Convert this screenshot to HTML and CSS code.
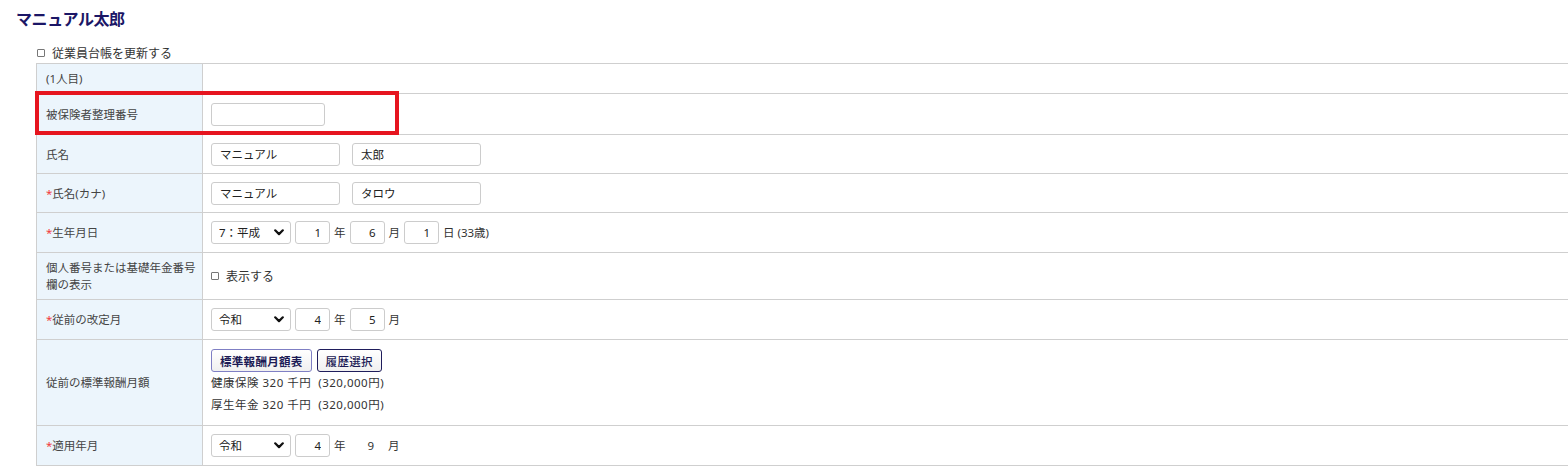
FILE: index.html
```html
<!DOCTYPE html>
<html lang="ja">
<head>
<meta charset="utf-8">
<title>マニュアル太郎</title>
<link rel="stylesheet" href="styles.css">
</head>
<body>
<h1 class="title">マニュアル太郎</h1>
<div class="form-wrap">
  <label class="update"><input type="checkbox" class="chk"><span>従業員台帳を更新する</span></label>
  <div class="table-box">
    <table class="form-table">
      <tr class="r-head"><th>(1人目)</th><td></td></tr>
      <tr class="r-num"><th>被保険者整理番号</th><td><input class="txt txt-num" type="text" value=""></td></tr>
      <tr class="r-name"><th>氏名</th><td><div class="line"><input class="txt txt-name" type="text" value="マニュアル"><input class="txt txt-name gap-l" type="text" value="太郎"></div></td></tr>
      <tr class="r-name"><th><span class="req">*</span>氏名(カナ)</th><td><div class="line"><input class="txt txt-name" type="text" value="マニュアル"><input class="txt txt-name gap-l" type="text" value="タロウ"></div></td></tr>
      <tr class="r-std"><th><span class="req">*</span>生年月日</th><td><div class="line"><select class="sel"><option>7：平成</option></select><input class="txt txt-sm" type="text" value="1"><span>年</span><input class="txt txt-sm" type="text" value="6"><span>月</span><input class="txt txt-sm" type="text" value="1"><span>日 (33歳)</span></div></td></tr>
      <tr class="r-two"><th>個人番号または基礎年金番号欄の表示</th><td><label class="line show"><input type="checkbox" class="chk"><span>表示する</span></label></td></tr>
      <tr class="r-std"><th><span class="req">*</span>従前の改定月</th><td><div class="line"><select class="sel"><option>令和</option></select><input class="txt txt-sm" type="text" value="4"><span>年</span><input class="txt txt-sm" type="text" value="5"><span>月</span></div></td></tr>
      <tr class="r-big"><th>従前の標準報酬月額</th><td>
        <div class="btns"><button class="btn btn-primary" type="button">標準報酬月額表</button><button class="btn btn-dark" type="button">履歴選択</button></div>
        <div class="amount">健康保険 320 千円&nbsp; (320,000円)</div>
        <div class="amount">厚生年金 320 千円&nbsp; (320,000円)</div>
      </td></tr>
      <tr class="r-std"><th><span class="req">*</span>適用年月</th><td><div class="line"><select class="sel"><option>令和</option></select><input class="txt txt-sm" type="text" value="4"><span>年</span><span class="fixed-m">9</span><span class="fixed-u">月</span></div></td></tr>
    </table>
    <div class="highlight"></div>
  </div>
</div>
</body>
</html>
```

FILE: styles.css
```css
html, body {
  margin: 0;
  padding: 0;
  overflow: hidden;
  background: #fff;
}
body {
  font-family: "Noto Sans", "Noto Sans CJK JP", sans-serif;
  font-size: 11.5px;
  color: #333;
}
.title {
  margin: 0;
  padding: 8px 0 0 16px;
  font-family: "Noto Sans CJK JP", sans-serif;
  font-size: 16px;
  line-height: 20px;
  font-weight: bold;
  color: #1b1666;
  letter-spacing: -0.4px;
}
.form-wrap {
  margin-left: 36px;
}
.update {
  display: flex;
  align-items: center;
  gap: 7px;
  height: 18px;
  margin-top: 16px;
  margin-bottom: 1px;
  font-size: 12px;
  padding-left: 1px;
}
.chk {
  -webkit-appearance: none;
  appearance: none;
  width: 8px;
  height: 8px;
  margin: 0;
  border: 1px solid #777;
  border-radius: 1px;
  background: #fff;
  box-sizing: border-box;
}
.table-box {
  position: relative;
}
.form-table {
  border-collapse: collapse;
  width: 1560px;
  table-layout: fixed;
}
.form-table th,
.form-table td {
  border: 1px solid #cfcfcf;
  padding: 0 8px;
  vertical-align: middle;
  text-align: left;
  font-weight: normal;
  line-height: 17px;
}
.form-table th {
  width: 152px;
  padding: 0 4px 0 9px;
  background: #ecf5fc;
  color: #444;
}
.r-head { height: 30px; }
.r-num { height: 41px; }
.r-name { height: 39px; }
.r-std { height: 40px; }
.r-two { height: 47px; }
.r-big { height: 86px; }
.req {
  color: #f23c3c;
}
.line {
  display: flex;
  align-items: center;
  gap: 4px;
}
.show {
  gap: 7px;
  font-size: 12px;
}
.txt {
  box-sizing: border-box;
  height: 23px;
  border: 1px solid #cccccc;
  border-radius: 3px;
  padding: 0 8px;
  margin: 0;
  font-family: inherit;
  font-size: 11.5px;
  color: #222;
  background: #fff;
  outline: none;
}
.txt-num { width: 114px; display: block; }
.txt-name { width: 129px; }
.gap-l { margin-left: 8px; }
.txt-sm {
  width: 35px;
  text-align: right;
}
.sel {
  -webkit-appearance: none;
  appearance: none;
  box-sizing: border-box;
  width: 80px;
  height: 23px;
  margin: 0;
  padding: 0 0 0 7px;
  border: 1px solid #cccccc;
  border-radius: 3px;
  font-family: inherit;
  font-size: 11.5px;
  color: #222;
  background: #fff url("data:image/svg+xml;utf8,<svg xmlns='http://www.w3.org/2000/svg' width='10' height='7' viewBox='0 0 10 7'><path d='M1.2 1.3 L5 5.1 L8.8 1.3' fill='none' stroke='%23111' stroke-width='2.2' stroke-linecap='round' stroke-linejoin='round'/></svg>") no-repeat right 6px center;
}
.fixed-m { margin-left: 18px; }
.fixed-u { margin-left: 10px; }
.btns {
  display: flex;
  gap: 5px;
}
.btn {
  box-sizing: border-box;
  height: 23px;
  padding: 0 8px;
  border-radius: 3px;
  font-family: inherit;
  font-size: 11.5px;
  color: #1b1a55;
  background: linear-gradient(#ffffff, #f0f0f0);
  cursor: pointer;
  letter-spacing: 0.3px;
}
.btn-primary {
  border: 1px solid #7f7fc4;
  font-weight: bold;
}
.btn-dark {
  border: 1px solid #1f1d5c;
  font-weight: 500;
}
.amount {
  line-height: 22px;
  color: #333;
  letter-spacing: 0.5px;
}
.highlight {
  position: absolute;
  left: -1px;
  top: 28px;
  width: 364px;
  height: 44px;
  box-sizing: border-box;
  border: 4px solid #e6151f;
  pointer-events: none;
}
```
